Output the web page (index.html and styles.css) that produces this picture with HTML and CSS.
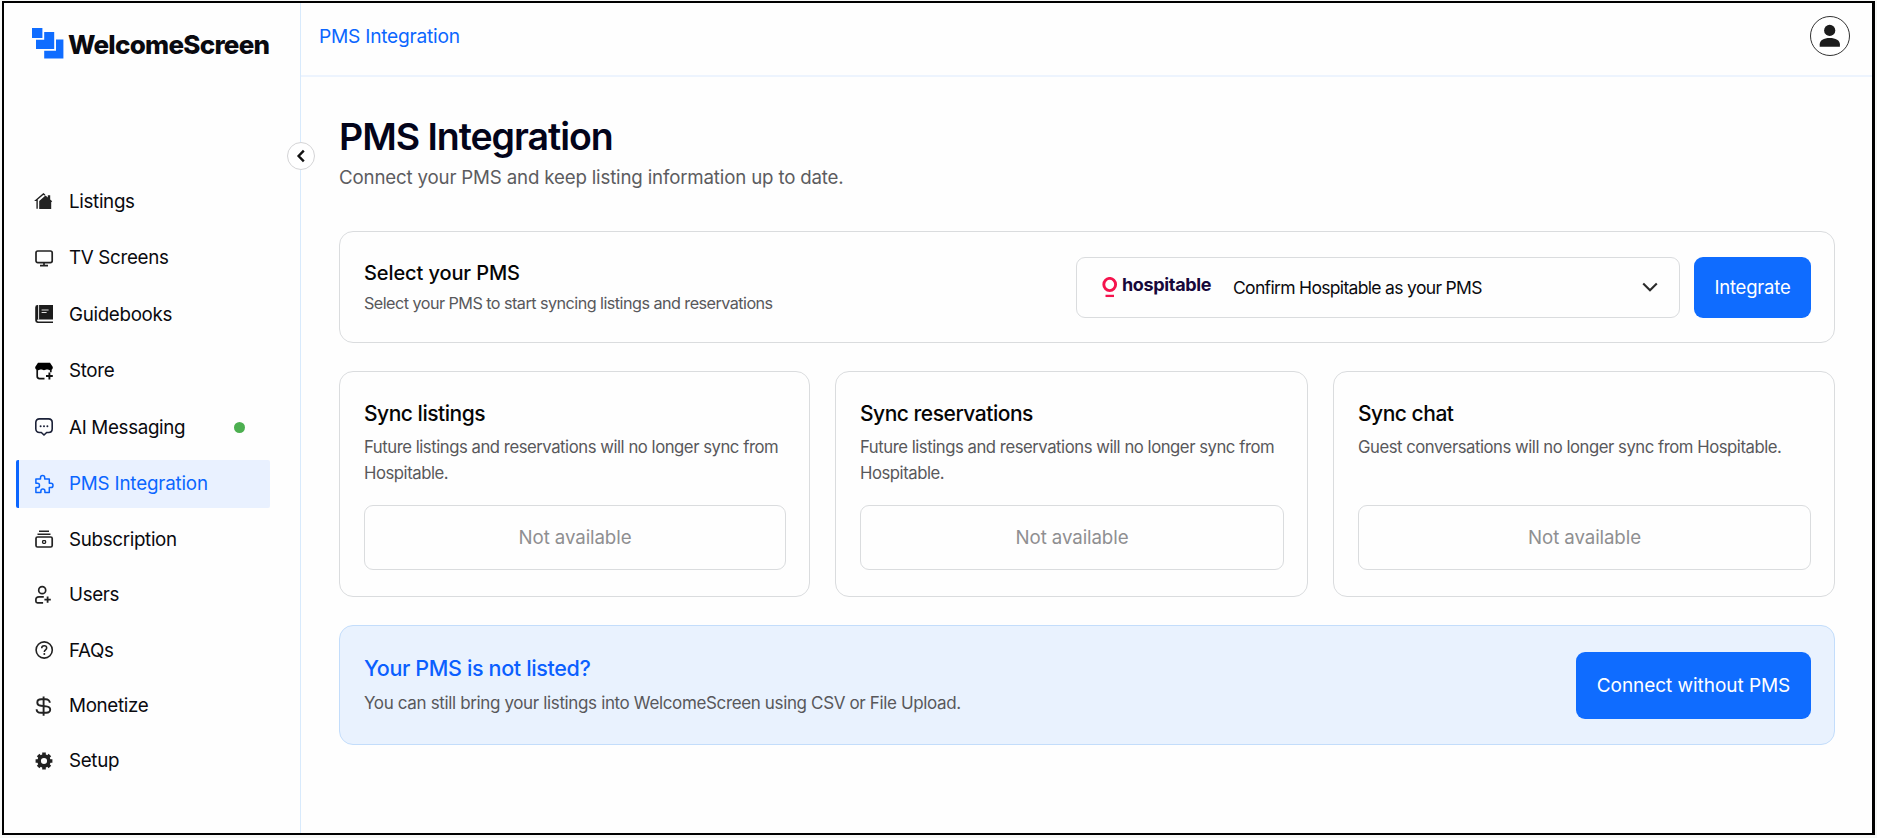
FILE: index.html
```html
<!DOCTYPE html>
<html lang="en">
  <head>
    <meta charset="UTF-8" />
    <meta name="viewport" content="width=device-width, initial-scale=1.0" />
    <title>PMS Integration - WelcomeScreen</title>
    <link rel="stylesheet" href="styles.css">
  </head>
  <body>
    <div class="app">
      <aside class="sidebar">
        <button type="button" class="sidebar-toggle" aria-label="Collapse menu">
          <svg width="10" height="14" viewBox="0 0 10 14">
            <path d="M7.8 1.6L2.6 7l5.2 5.4" fill="none" stroke="#111" stroke-width="2.4" />
          </svg>
        </button>

        <a href="#" class="logo">
          <svg class="logo-mark" width="32" height="31" viewBox="0 0 32 31">
            <path d="M0 0h10.4v10H0z" />
            <path d="M12.2 4h10v17H4V11.8h8.2z" />
            <path d="M24 11.4h7.4v19.2H12.2v-7.8H24z" />
          </svg>
          <span class="logo-text">WelcomeScreen</span>
        </a>

        <nav class="menu">
          <a href="#" class="menu-item">
            <svg class="menu-icon" viewBox="0 0 18 18">
              <path d="M4.2 17V9l6.3-5.6 2.3 2V3.2h2.4v4.2l2 1.8-1 1.1V17z" fill="#222" />
              <path d="M2.1 16.8V8.3H1l7.4-6.4 1.5 1.2" fill="none" stroke="#222" stroke-width="1.4" />
            </svg>
            <span>Listings</span>
          </a>
          <a href="#" class="menu-item">
            <svg class="menu-icon" viewBox="0 0 18 18">
              <rect x="1" y="2" width="16.2" height="11.6" rx="1.8" fill="none" stroke="#222" stroke-width="1.7" />
              <path d="M9 13.5v3M5 16.6h8" stroke="#222" stroke-width="1.7" />
            </svg>
            <span>TV Screens</span>
          </a>
          <a href="#" class="menu-item">
            <svg class="menu-icon" viewBox="0 0 18 18">
              <path d="M2.6 0H18v14.6H3.4c-1 0-1.3.4-1.3.9s.4.9 1.3.9H18V18H2.6A2.4 2.4 0 0 1 .2 15.6V2.4A2.4 2.4 0 0 1 2.6 0z" fill="#1c1c1c" />
              <path d="M3.6 0v14.6" stroke="#fff" stroke-width=".9" />
              <path d="M6.6 5h7M6.6 7.5h5" stroke="#ddd" />
            </svg>
            <span>Guidebooks</span>
          </a>
          <a href="#" class="menu-item">
            <svg class="menu-icon" viewBox="0 0 18 18">
              <path d="M3 .8h12L17.8 5c.3 2-1 3.2-2.7 3.2-1.2 0-2-.6-3-.6s-1.9.6-3.1.6-2-.6-3-.6-1.6.6-2.9.6C1.2 8.2-.1 7 .2 5z" fill="#000" />
              <path d="M2.2 7.5v6.8c0 1.5.8 2.3 2.3 2.3h5M15.8 7.5v2.7" fill="none" stroke="#111" stroke-width="1.7" />
              <path d="M14.4 10.6v6.8M11 14h6.8" stroke="#111" stroke-width="1.9" />
            </svg>
            <span>Store</span>
          </a>
          <a href="#" class="menu-item">
            <svg class="menu-icon" viewBox="0 0 18 18">
              <path d="M4.5.9h9c2.3 0 3.7 1.5 3.7 3.7v6.2c0 2.2-1.4 3.7-3.7 3.7h-1.8L9 17l-2.7-2.5H4.5C2.2 14.5.8 13 .8 10.8V4.6C.8 2.4 2.2.9 4.5.9z" fill="none" stroke="#1b2138" stroke-width="1.6" />
              <circle cx="5.6" cy="8.3" r="1" fill="#1b2138" />
              <circle cx="9" cy="8.3" r="1" fill="#1b2138" />
              <circle cx="12.4" cy="8.3" r="1" fill="#1b2138" />
            </svg>
            <span>AI Messaging</span>
            <i class="status-dot"></i>
          </a>
          <a href="#" class="menu-item active">
            <svg class="menu-icon" viewBox="0 0 18 18">
              <path d="M.9 4.1h4.6V2.7a2.1 2.1 0 0 1 4.2 0v1.4h4.6v4.2h1.6a2.1 2.1 0 0 1 0 4.2h-1.6v5H9.900v-1.400a2 2 0 0 0-4 0v1.400h-5v-5h1.500a2 2 0 0 0 0-4.200H.9z" fill="none" stroke="#0b66ff" stroke-width="1.5" stroke-linejoin="round" />
            </svg>
            <span>PMS Integration</span>
          </a>
          <a href="#" class="menu-item">
            <svg class="menu-icon" viewBox="0 0 18 18">
              <rect x="1" y="7" width="16.2" height="10" rx="1.5" fill="none" stroke="#222" stroke-width="1.7" />
              <path d="M2.5 4.2h13M4 1.2h10" stroke="#222" stroke-width="1.6" />
              <rect x="7.6" y="10.6" width="3" height="2.8" rx=".8" fill="none" stroke="#222" stroke-width="1.3" />
            </svg>
            <span>Subscription</span>
          </a>
          <a href="#" class="menu-item">
            <svg class="menu-icon" viewBox="0 0 18 18">
              <circle cx="7.2" cy="4.2" r="3.5" fill="none" stroke="#222" stroke-width="1.7" />
              <path d="M8.8 10.8H4c-2 0-3.1 1-3.1 2.7v1.8c0 1 .5 1.6 1.6 1.6h5.6" fill="none" stroke="#222" stroke-width="1.7" />
              <path d="M12.6 10.4v6.4M9.4 13.6h6.4" stroke="#222" stroke-width="1.8" />
            </svg>
            <span>Users</span>
          </a>
          <a href="#" class="menu-item">
            <svg class="menu-icon" viewBox="0 0 18 18">
              <circle cx="9.2" cy="9" r="8.1" fill="none" stroke="#222" stroke-width="1.6" />
              <path d="M6.7 7.2c0-1.5 1-2.4 2.5-2.4s2.5.9 2.5 2.2c0 1.8-2.4 1.9-2.4 3.9" fill="none" stroke="#222" stroke-width="1.5" />
              <circle cx="9.3" cy="13" r="1" fill="#222" />
            </svg>
            <span>FAQs</span>
          </a>
          <a href="#" class="menu-item">
            <svg class="menu-icon" viewBox="0 0 18 18">
              <path d="M14.8 5.8c0-2.2-2-3.5-4-3.5H6.2c-2.3 0-3.9 1.2-3.9 3.1S3.6 8.5 6 8.8l5.2.6c2.5.3 4 1.2 4 3.2s-1.6 3.2-4 3.2H6c-2.5 0-4.4-1.3-4.4-3.5M8.6-.6v19.4" fill="none" stroke="#222" stroke-width="1.9" />
            </svg>
            <span>Monetize</span>
          </a>
          <a href="#" class="menu-item">
            <svg class="menu-icon" viewBox="0 0 18 18">
              <circle cx="9" cy="9" r="4.9" fill="none" stroke="#222" stroke-width="3.6" />
              <path d="M9 .6v3M9 14.4v3M.6 9h3M14.4 9h3M3.1 3.1l2.1 2.1M12.8 12.8l2.1 2.1M3.1 14.9l2.1-2.1M12.8 5.2l2.1-2.1" stroke="#222" stroke-width="3.6" />
            </svg>
            <span>Setup</span>
          </a>
        </nav>
      </aside>

      <div class="page">
        <header class="topbar">
          <span class="breadcrumb">PMS Integration</span>
          <button type="button" class="avatar" aria-label="Account">
            <svg width="22" height="24" viewBox="0 0 22 24">
              <circle cx="10.7" cy="6.4" r="5.6" fill="#1c1c1c" />
              <path d="M.7 22.7v-2.4c0-4 4-6.3 10-6.3s10.2 2.3 10.2 6.3v2.4z" fill="#1c1c1c" />
            </svg>
          </button>
        </header>

        <main class="content">
          <h1>PMS Integration</h1>
          <p class="subtitle">Connect your PMS and keep listing information up to date.</p>

          <section class="card select-card">
            <div>
              <h2 class="select-title">Select your PMS</h2>
              <p class="select-desc">Select your PMS to start syncing listings and reservations</p>
            </div>
            <div class="select-actions">
              <div class="pms-select">
                <span class="hospitable">
                  <svg width="16" height="21" viewBox="0 0 16 21">
                    <ellipse cx="7.7" cy="7.5" rx="5.9" ry="6.1" fill="none" stroke="#f5134d" stroke-width="2.9" />
                    <path d="M3.5 18.9h8.5" stroke="#f5134d" stroke-width="2.3" />
                  </svg>
                  <b>hospitable</b>
                </span>
                <span class="pms-value">Confirm Hospitable as your PMS</span>
                <svg class="chevron" width="16" height="10" viewBox="0 0 16 10">
                  <path d="M1.2 1.4L8 8.2l6.8-6.8" fill="none" stroke="#2b2b2b" stroke-width="2.1" />
                </svg>
              </div>
              <button type="button" class="btn btn-integrate">Integrate</button>
            </div>
          </section>

          <section class="sync-grid">
            <div class="card sync-card">
              <h2>Sync listings</h2>
              <p>Future listings and reservations will no longer sync from Hospitable.</p>
              <button type="button" class="btn-disabled" disabled>Not available</button>
            </div>
            <div class="card sync-card">
              <h2>Sync reservations</h2>
              <p>Future listings and reservations will no longer sync from Hospitable.</p>
              <button type="button" class="btn-disabled" disabled>Not available</button>
            </div>
            <div class="card sync-card">
              <h2>Sync chat</h2>
              <p>Guest conversations will no longer sync from Hospitable.</p>
              <button type="button" class="btn-disabled" disabled>Not available</button>
            </div>
          </section>

          <section class="card banner">
            <div>
              <h2>Your PMS is not listed?</h2>
              <p>You can still bring your listings into WelcomeScreen using CSV or File Upload.</p>
            </div>
            <button type="button" class="btn btn-connect">Connect without PMS</button>
          </section>
        </main>
      </div>
    </div>
  </body>
</html>
```
FILE: styles.css
```css
* {
  box-sizing: border-box;
}

body {
  margin: 0;
  padding: 1px 2px 3px 2px;
  height: 838px;
  background-color: #f7f8f7;
  font-family: Inter, "Liberation Sans", sans-serif;
  color: #0a0a0f;
}

h1,
h2,
p {
  margin: 0;
}

a {
  color: inherit;
  text-decoration: none;
}

button {
  padding: 0;
  font-family: inherit;
  cursor: pointer;
}

.app {
  display: flex;
  height: 834px;
  border: 2px solid #000;
  border-right-width: 3px;
  background-color: #fefefe;
}

/* sidebar */
.sidebar {
  position: relative;
  flex: none;
  width: 297px;
  padding: 25px 30px 0 12px;
  border-right: 1px solid #d8eafc;
}

.sidebar-toggle {
  position: absolute;
  top: 139px;
  right: -15px;
  display: flex;
  justify-content: center;
  align-items: center;
  width: 28px;
  height: 28px;
  border: 1px solid #d4d4d6;
  border-radius: 50%;
  background-color: #fff;
}

.logo {
  display: flex;
  align-items: center;
  gap: 4px;
  height: 34px;
  padding-left: 16px;
}

.logo-mark {
  flex: none;
  margin-bottom: 3px;
  fill: #0f6cff;
}

.logo-text {
  font-size: 26px;
  font-weight: 800;
  letter-spacing: -0.75px;
  line-height: 34px;
}

.menu {
  display: flex;
  flex-direction: column;
  margin-top: 115px;
}

.menu-item {
  display: flex;
  align-items: center;
  height: 48px;
  margin-bottom: 8.6px;
  padding-left: 16px;
  border-left: 3px solid transparent;
  border-radius: 2px;
  font-size: 18.8px;
  letter-spacing: -0.33px;
}

.menu-item.active {
  border-left-color: #0b66ff;
  background-color: #e9f1ff;
  color: #0b66ff;
  letter-spacing: -0.18px;
}

.menu-item.active,
.menu-item.active ~ .menu-item {
  margin-bottom: 7.4px;
}

.menu-icon {
  flex: none;
  width: 18px;
  height: 18px;
  margin-right: 16px;
  overflow: visible;
}

.status-dot {
  width: 11px;
  height: 11px;
  margin-left: auto;
  margin-right: 25px;
  border-radius: 50%;
  background-color: #4caf50;
}

/* top bar */
.page {
  flex: 1;
  min-width: 0;
}

.topbar {
  display: flex;
  justify-content: space-between;
  align-items: center;
  height: 74px;
  padding: 0 22px 6px 18px;
  border-bottom: 2px solid #edf4fe;
}

.breadcrumb {
  font-size: 19.2px;
  letter-spacing: -0.25px;
  color: #0b66ff;
}

.avatar {
  display: flex;
  justify-content: center;
  align-items: center;
  width: 40px;
  height: 40px;
  border: 1px solid #333;
  border-radius: 50%;
  background-color: #fff;
}

/* content */
.content {
  padding: 37px 37px 0 38px;
}

h1 {
  font-size: 37.5px;
  font-weight: 600;
  letter-spacing: -1.05px;
  line-height: 46px;
  color: #03041a;
}

.subtitle {
  margin-top: 5px;
  font-size: 18.7px;
  letter-spacing: -0.17px;
  line-height: 26px;
  color: #5c5c5f;
}

.card {
  border: 1px solid #dadcde;
  border-radius: 14px;
}

.card h2 {
  font-size: 21px;
  font-weight: 450;
  letter-spacing: -0.48px;
  line-height: 28px;
  color: #050505;
}

.card p {
  font-size: 16.7px;
  letter-spacing: -0.46px;
  line-height: 26px;
  color: #58585b;
}

.select-card {
  display: flex;
  justify-content: space-between;
  align-items: center;
  height: 112px;
  margin-top: 40px;
  padding: 0 23px 0 24px;
}

.card .select-title {
  font-size: 20px;
  letter-spacing: -0.1px;
}

.card .select-desc {
  margin-top: 4px;
  font-size: 16.2px;
  letter-spacing: -0.54px;
  line-height: 24px;
}

.select-actions {
  display: flex;
  gap: 14px;
}

.pms-select {
  display: flex;
  align-items: center;
  width: 604px;
  height: 61px;
  padding: 0 21px 0 25px;
  border: 1px solid #dadcde;
  border-radius: 9px;
}

.hospitable {
  display: flex;
  align-items: center;
  gap: 4px;
  width: 131px;
}

.hospitable b {
  padding-bottom: 6px;
  font-size: 18px;
  letter-spacing: -0.35px;
  color: #17083a;
}

.pms-value {
  font-size: 17.5px;
  letter-spacing: -0.67px;
}

.chevron {
  margin-left: auto;
}

.btn {
  border: none;
  border-radius: 9px;
  background-color: #0f6cff;
  color: #fff;
}

.btn-integrate {
  width: 117px;
  height: 61px;
  font-size: 18.5px;
  letter-spacing: -0.2px;
}

.sync-grid {
  display: grid;
  grid-template-columns: 471fr 473fr 502fr;
  gap: 25px;
  margin-top: 28px;
}

.sync-card {
  display: flex;
  flex-direction: column;
  height: 226px;
  padding: 28px 23px 26px 24px;
}

.sync-card p {
  margin-top: 6px;
}

.btn-disabled {
  height: 65px;
  margin-top: auto;
  border: 1px solid #dadcde;
  border-radius: 9px;
  background-color: transparent;
  font-size: 18.7px;
  letter-spacing: -0.1px;
  color: #8f8f91;
}

.banner {
  display: flex;
  justify-content: space-between;
  align-items: center;
  height: 120px;
  margin-top: 28px;
  padding: 0 23px 0 24px;
  border-color: #c3ddfb;
  background-color: #e9f2fe;
}

.banner h2 {
  font-size: 21.5px;
  letter-spacing: -0.35px;
  color: #0b5fff;
}

.banner p {
  margin-top: 8px;
  font-size: 17px;
  letter-spacing: -0.36px;
}

.btn-connect {
  width: 235px;
  height: 67px;
  font-size: 19px;
  letter-spacing: -0.05px;
}
```
